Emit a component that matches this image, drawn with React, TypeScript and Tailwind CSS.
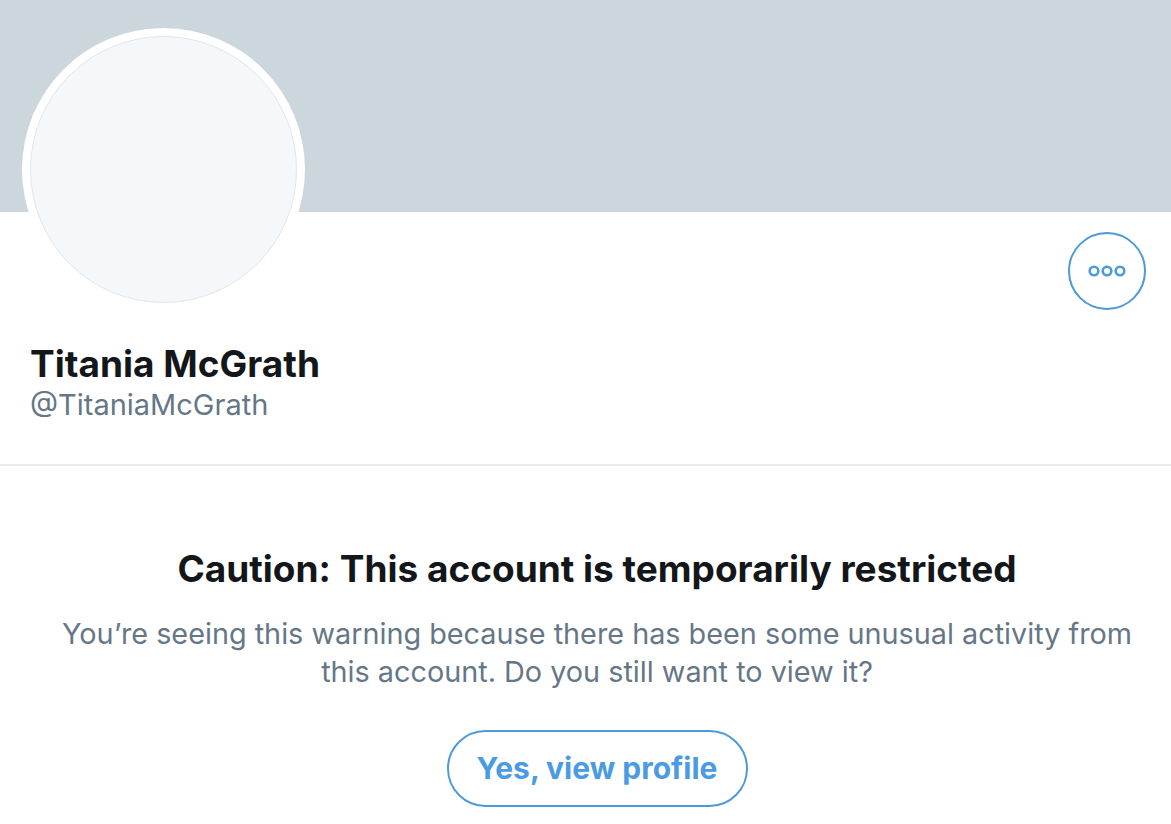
import React from "react";

export default function App() {
  return (
    <div
      className="w-[1171px] h-[824px] bg-white overflow-hidden"
      style={{ fontFamily: "Inter, 'Noto Sans', sans-serif" }}
    >
      <div className="h-[212px] bg-[#ccd6dd]" />
      <div className="flex items-start justify-between">
        <div className="ml-[22px] mt-[-184px] w-[283px] h-[283px] rounded-full bg-white flex items-center justify-center">
          <div className="w-[267px] h-[267px] rounded-full bg-[#f5f8fa] border border-[#e1e6ea]" />
        </div>
        <button className="mt-[20px] mr-[25px] w-[78px] h-[78px] rounded-full border-2 border-[#4d9ad9] flex items-center justify-center">
          <svg width="40" height="14" viewBox="0 0 40 14">
            <circle cx="7" cy="7" r="4.3" fill="none" stroke="#4d9ad9" strokeWidth="2.6" />
            <circle cx="20" cy="7" r="4.3" fill="none" stroke="#4d9ad9" strokeWidth="2.6" />
            <circle cx="33" cy="7" r="4.3" fill="none" stroke="#4d9ad9" strokeWidth="2.6" />
          </svg>
        </button>
      </div>
      <div className="pl-[30px] mt-[31px]">
        <div className="text-[37px] leading-[44px] font-bold text-[#14171a]">Titania McGrath</div>
        <div className="text-[29px] leading-[38px] text-[#657786]">@TitaniaMcGrath</div>
      </div>
      <div className="mt-[40px] h-[2px] bg-[#e6ecf0]" />
      <div className="flex flex-col items-center text-center mt-[81px] pl-[23px]">
        <div className="text-[37px] leading-[44px] font-bold text-[#14171a]">
          Caution: This account is temporarily restricted
        </div>
        <div className="mt-[24px] text-[28.8px] leading-[38px] text-[#657786] w-[1095px]">
          You’re seeing this warning because there has been some unusual activity from this account. Do you still want to view it?
        </div>
        <button className="mt-[39px] w-[301px] h-[77px] rounded-full border-2 border-[#4d9ad9] text-[30px] font-bold text-[#4a9be3]">
          Yes, view profile
        </button>
      </div>
    </div>
  );
}
